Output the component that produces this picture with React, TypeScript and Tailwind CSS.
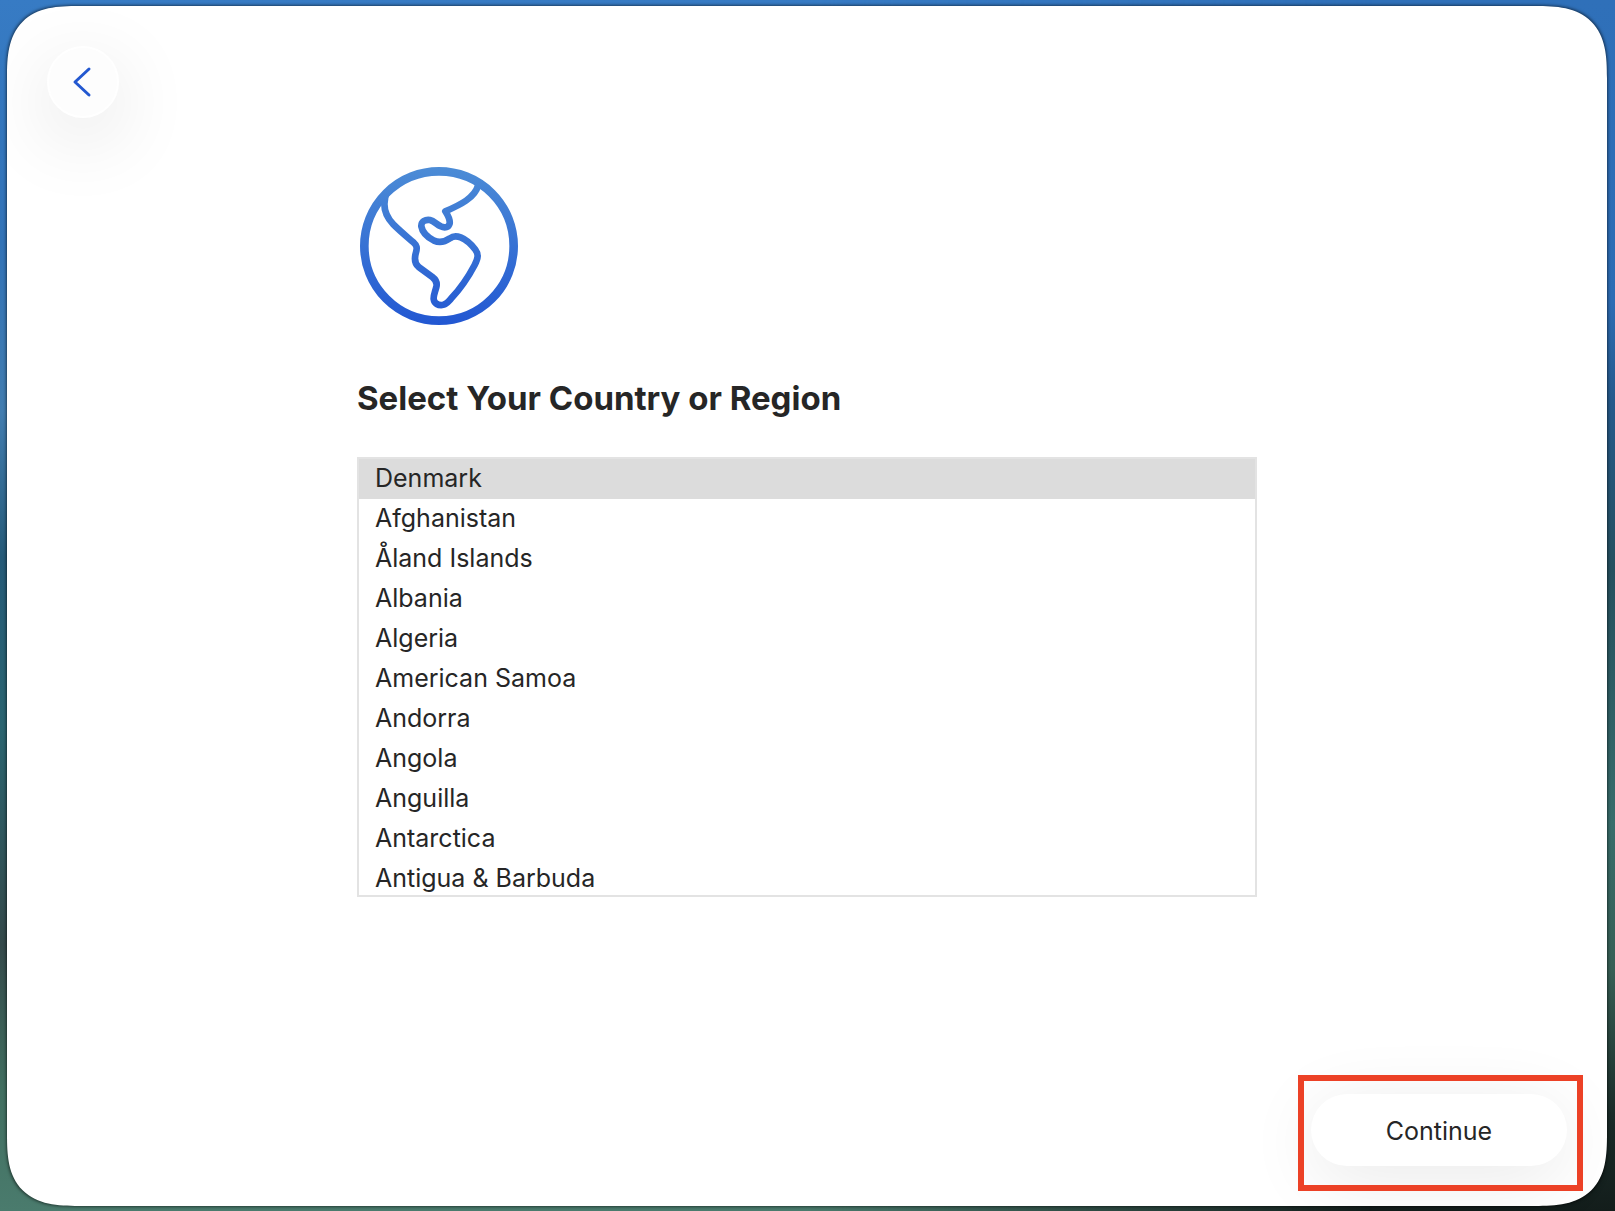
import { useState } from 'react';

const countries = [
  'Denmark',
  'Afghanistan',
  'Åland Islands',
  'Albania',
  'Algeria',
  'American Samoa',
  'Andorra',
  'Angola',
  'Anguilla',
  'Antarctica',
  'Antigua & Barbuda',
];

function GlobeIcon() {
  return (
    <svg width="162" height="160" viewBox="21 33 486 480" fill="none" aria-hidden="true">
      <defs>
        <linearGradient id="globe" gradientUnits="userSpaceOnUse" x1="0" y1="36" x2="0" y2="510">
          <stop offset="0" stopColor="#4c8cd6" />
          <stop offset="1" stopColor="#2257d2" />
        </linearGradient>
      </defs>
      <g stroke="url(#globe)" strokeLinejoin="round">
        <circle cx="267" cy="273" r="224" strokeWidth="26" />
        <path
          strokeWidth="20"
          d="M112 108 C96 145 103 180 130 208 C150 228 172 246 190 262 C201 272 202 278 198 292 C192 312 193 325 206 336 L247 366 C260 376 262 385 259 396 C255 412 250 422 251 432 C253 447 265 451 277 450 C288 449 294 441 304 430 C330 402 355 366 374 330 C385 308 386 298 376 284 C362 265 347 253 332 247 C318 242 310 242 300 250 C283 262 268 264 252 257 C235 248 217 232 214 214 C213 199 226 193 240 195 C252 198 260 208 272 214 C285 220 296 217 299 205 C301 193 293 180 286 169 C330 150 375 128 384 92"
        />
      </g>
    </svg>
  );
}

export default function App() {
  const [country, setCountry] = useState('Denmark');

  return (
    <div className="relative flex min-h-screen bg-[linear-gradient(180deg,#2f70b9_0%,#2d6cb4_25%,#255a8c_33%,#25505f_47%,#386d6b_68%,#375f55_80%,#1b2c29_92%,#131d1b_100%)] pt-[6px] pr-[8px] pb-[5px] pl-[7px] font-[Inter,'Liberation_Sans',sans-serif] text-[#262626]">
      {/* Wallpaper, left side */}
      <div className="absolute inset-0 bg-[linear-gradient(180deg,#377bc4_0%,#3273b7_20%,#427db0_34%,#255a78_46%,#2a6470_60%,#34494a_78%,#416f60_90%,#4a7b6d_100%)] mask-[linear-gradient(90deg,#000_50%,transparent_85%)]"></div>

      <main className="relative flex flex-1 flex-col rounded-[52px] bg-white p-10 shadow-[0_0_3px_1px_rgba(0,0,0,0.5)] supports-[corner-shape:squircle]:rounded-[72px] supports-[corner-shape:squircle]:[corner-shape:superellipse(1.5)]">
        <button
          type="button"
          aria-label="Back"
          className="flex size-[72px] items-center justify-center rounded-full border-2 border-white bg-[#fdfdfd] pr-0.5 shadow-[0_20px_80px_rgba(0,0,0,0.12)]"
        >
          <svg width="20" height="32" viewBox="0 0 20 32" fill="none" aria-hidden="true">
            <path d="M17 3 L3 16 L17 29" stroke="#2358d0" strokeWidth="3" strokeLinecap="round" strokeLinejoin="round" />
          </svg>
        </button>

        <section className="mx-auto mt-12 w-full max-w-[900px]">
          <GlobeIcon />
          <h1 className="mt-12 text-[33px] leading-12 font-bold">
            <label htmlFor="country">Select Your Country or Region</label>
          </h1>
          <select
            id="country"
            size={11}
            value={country}
            onChange={(e) => setCountry(e.target.value)}
            className="mt-[35px] block h-[440px] w-full overflow-hidden rounded-none border-2 border-[#e3e3e3] bg-white text-[25px] outline-none [scrollbar-width:none]"
          >
            {countries.map((name) => (
              <option
                key={name}
                value={name}
                className="h-10 px-4 pt-1 pb-0 text-[#262626] checked:bg-[linear-gradient(#dcdcdc,#dcdcdc)]"
              >
                {name}
              </option>
            ))}
          </select>
        </section>

        <footer className="mt-auto flex justify-end pt-10">
          <div className="relative">
            <button
              type="button"
              className="h-[72px] w-64 rounded-full bg-white pt-1 text-[25px] shadow-[0_12px_72px_rgba(0,0,0,0.09)]"
            >
              Continue
            </button>
            {/* Highlight around the next step */}
            <div className="pointer-events-none absolute -top-[19px] -right-4 -bottom-[25px] -left-[13px] border-6 border-[#ec4126]"></div>
          </div>
        </footer>
      </main>
    </div>
  );
}
